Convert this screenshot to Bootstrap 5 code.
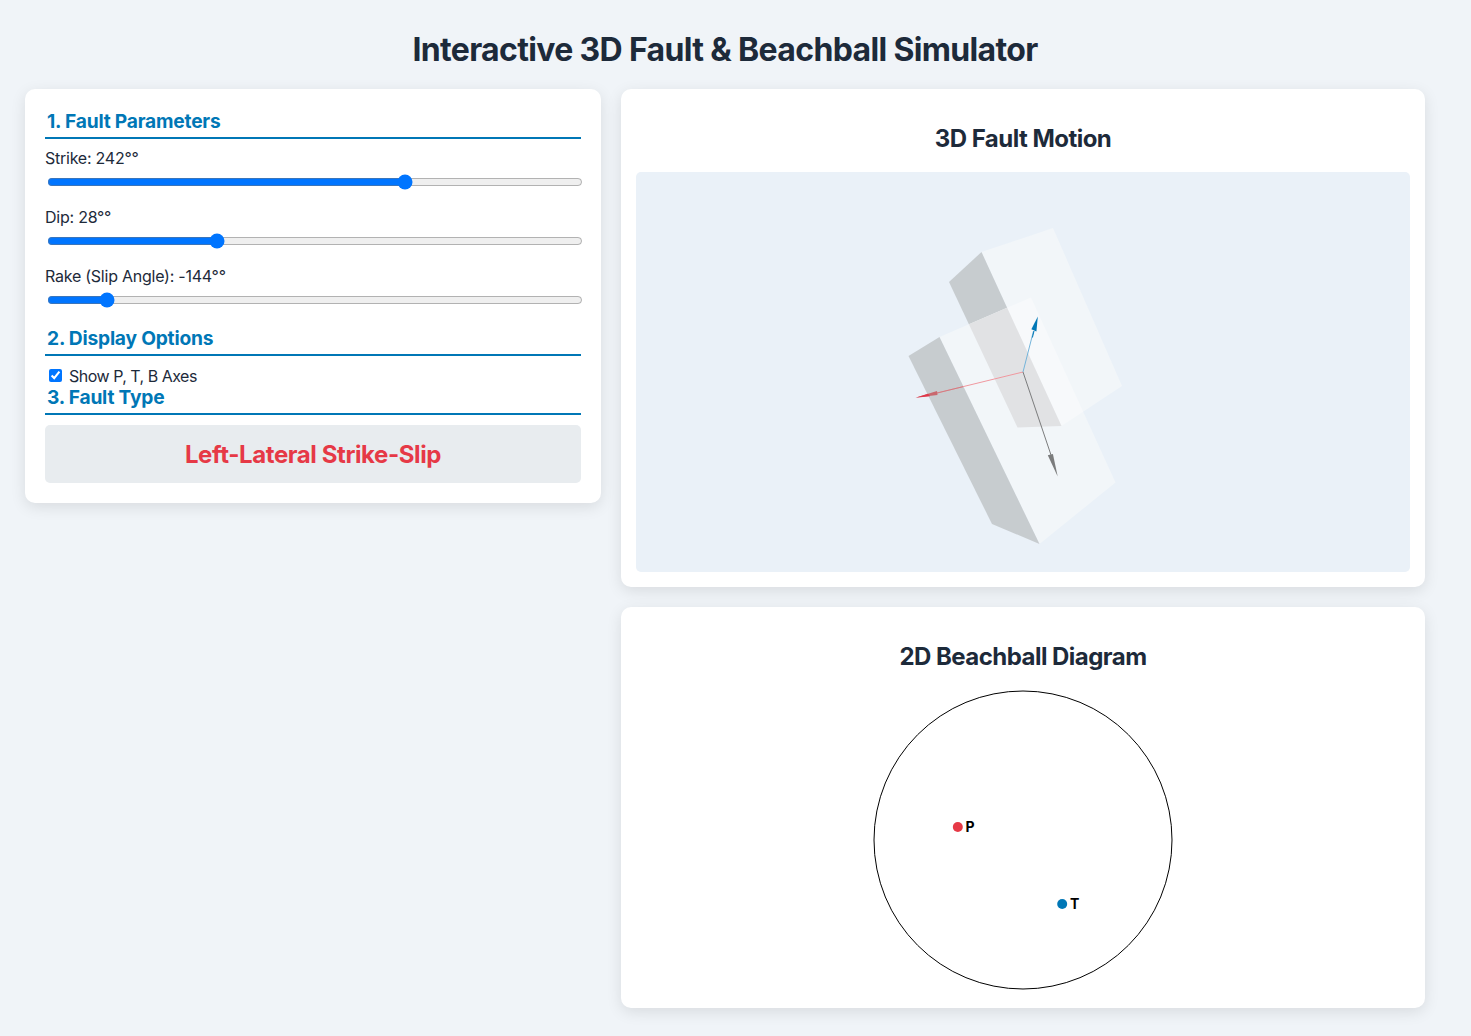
<!DOCTYPE html>
<html lang="en">
<head>
<meta charset="utf-8">
<meta name="viewport" content="width=device-width, initial-scale=1">
<title>Interactive 3D Fault &amp; Beachball Simulator</title>
<link href="https://cdn.jsdelivr.net/npm/bootstrap@5.3.0/dist/css/bootstrap.min.css" rel="stylesheet">
<style>
body{background:#f0f4f8;color:#1d2a3a;font-family:Inter,"Liberation Sans",sans-serif;font-size:16px;line-height:19px;padding:25px}
.sim{width:1400px}
.page-title{font-size:32px;line-height:38px;font-weight:700;letter-spacing:-.65px;margin:6px 0 20px}
.panes,.views{gap:20px}
.controls{width:576px;padding:20px}
.views{width:804px}
.panel{background:#fff;border-radius:10px;box-shadow:0 4px 15px rgba(0,0,0,.1)}
.sect{font-size:19.2px;line-height:23px;font-weight:700;letter-spacing:-.21px;color:#0077b6;border-bottom:2px solid #0077b6;padding:1px 2px 4px;margin:0 0 10px}
.param{height:59px}
.param label{display:block;letter-spacing:-.24px}
.param input{display:block;width:536px;height:16px;margin:6px 2px 0;accent-color:#0075ff}
.opt{height:19px}
.opt label{letter-spacing:-.5px;padding-top:1px}
.opt input{width:13px;height:13px;margin:3px 7px 3px 4px;accent-color:#0075ff}
.fault-type{height:58px;background:#e8ecef;border-radius:5px;color:#e63946;font-size:24px;font-weight:700;letter-spacing:-.4px}
.view-panel{padding:15px;height:498px;display:flow-root}
.view-title{font-size:24px;line-height:29px;font-weight:700;letter-spacing:-.53px;margin:20px 0 19px}
.ball-title{margin-top:35px}
.scene{width:774px;height:400px;border-radius:5px;background:#eaf1f8}
.ball-panel{height:401px}
.ball text{font:700 14px Inter,"Liberation Sans",sans-serif}
</style>
<script src="https://cdn.jsdelivr.net/npm/bootstrap@5.3.0/dist/js/bootstrap.bundle.min.js"></script>
</head>
<body>
<div class="sim">
  <h1 class="page-title text-center">Interactive 3D Fault &amp; Beachball Simulator</h1>
  <main class="panes d-flex align-items-start">
    <section class="controls panel flex-shrink-0">
      <h2 class="sect">1. Fault Parameters</h2>
      <div class="param"><label for="strike">Strike: 242°°</label><input id="strike" type="range" min="0" max="360" value="242"></div>
      <div class="param"><label for="dip">Dip: 28°°</label><input id="dip" type="range" min="0" max="90" value="28"></div>
      <div class="param"><label for="rake">Rake (Slip Angle): -144°°</label><input id="rake" type="range" min="-180" max="180" value="-144"></div>
      <h2 class="sect">2. Display Options</h2>
      <div class="opt d-flex"><input id="axes" type="checkbox" checked><label for="axes">Show P, T, B Axes</label></div>
      <h2 class="sect">3. Fault Type</h2>
      <div class="fault-type d-flex align-items-center justify-content-center">Left-Lateral Strike-Slip</div>
    </section>
    <div class="views d-flex flex-column flex-shrink-0">
      <section class="panel view-panel">
        <h2 class="view-title text-center">3D Fault Motion</h2>
        <svg class="scene d-block" viewBox="636 172 774 400">
          <defs><clipPath id="lower"><path d="M908.5 356 939.5 337 1031 297.5 1115.5 482.5 1039.5 544 992 524z"/></clipPath></defs>
          <!-- upper block -->
          <path fill="#f2f6f9" d="M981.5 252 1053 228 1122 386 1061.5 426z"/>
          <path fill="#c7cccf" d="M949 282 981.5 252 1061.5 426 1017.5 427.5z"/>
          <!-- lower block -->
          <path fill="#f2f6f9" d="M939.5 337 1031 297.5 1115.5 482.5 1039.5 544z"/>
          <path fill="#c7cccf" d="M908.5 356 939.5 337 1039.5 544 992 524z"/>
          <!-- overlap of the two translucent blocks -->
          <g clip-path="url(#lower)">
            <path fill="#f7f9fb" d="M981.5 252 1053 228 1122 386 1061.5 426z"/>
            <path fill="#e1e2e4" d="M949 282 981.5 252 1061.5 426 1017.5 427.5z"/>
          </g>
          <!-- P, T and B axes -->
          <path stroke="#f0989f" d="M1023 372 937 393"/>
          <path stroke="#cf7d82" d="M963 386.7 937 393"/>
          <path fill="#c9686e" d="M916 397.6 937 391 937.5 395z"/>
          <path fill="#e0384a" d="M915.5 397.8 928 393.8 930 396.3z"/>
          <path stroke="#74b4da" d="M1023 372 1033.5 331"/>
          <path stroke="#0077b6" d="M1032.4 337.5 1034 331"/>
          <path fill="#0077b6" d="M1037.8 316.5 1036.4 331.5 1031.4 329.3z"/>
          <path stroke="#7b7c7d" d="M1023 372 1051 455"/>
          <path fill="#7b7c7d" d="M1057.7 476.5 1047.8 455.3 1052.9 454z"/>
        </svg>
      </section>
      <section class="panel ball-panel d-flex flex-column align-items-center">
        <h2 class="view-title ball-title text-center">2D Beachball Diagram</h2>
        <svg class="ball d-block" width="300" height="300" viewBox="873 690 300 300">
          <circle cx="1023" cy="840" r="149" fill="none" stroke="#000"/>
          <circle cx="957.8" cy="827" r="5" fill="#e63946"/><text x="965.5" y="832">P</text>
          <circle cx="1062.2" cy="904" r="5" fill="#0077b6"/><text x="1070" y="909">T</text>
        </svg>
      </section>
    </div>
  </main>
</div>
</body>
</html>
